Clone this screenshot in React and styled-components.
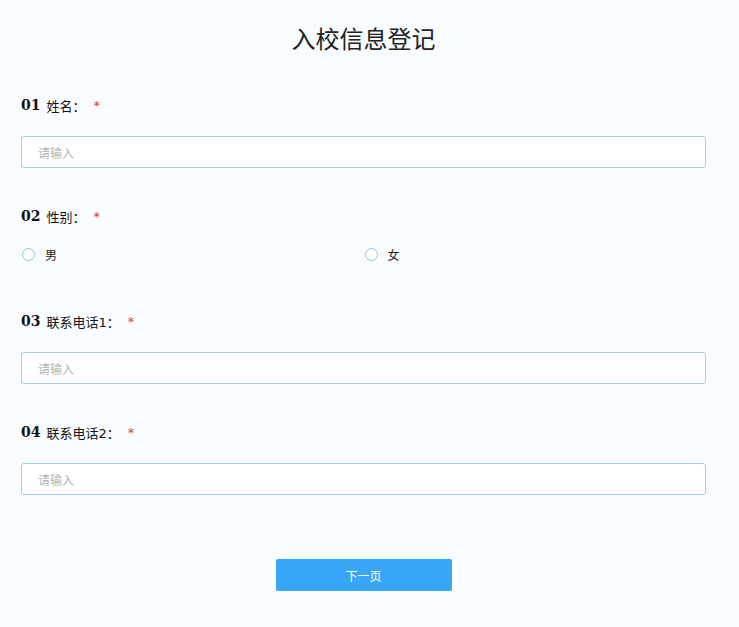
import styled, { createGlobalStyle } from 'styled-components';

const GlobalStyle = createGlobalStyle`
    html, body {
        margin: 0;
        padding: 0;
        background: #f9fcfe;
        font-family: "DejaVu Sans", "Noto Sans CJK SC", sans-serif;
        color: #222;
    }
`;

const Page = styled.div`
    width: 685px;
    padding: 22px 33px 36px 21px;
`;

const Title = styled.h1`
    margin: 0 0 41px;
    text-align: center;
    font-size: 24px;
    font-weight: normal;
    line-height: 32px;
    color: #222;
    font-family: "Noto Sans CJK SC", sans-serif;
`;

const Field = styled.div`
    margin-bottom: 38px;
`;

const Label = styled.div`
    display: flex;
    align-items: center;
    height: 20px;
    font-size: 13px;
    margin-bottom: 21px;
    color: #111;
`;

const Num = styled.span`
    font-family: "DejaVu Serif", serif;
    font-weight: bold;
    font-size: 14px;
    margin-right: 6px;
`;

const Star = styled.span`
    color: #c4464a;
    margin-left: 8px;
`;

const Input = styled.input`
    box-sizing: border-box;
    display: block;
    width: 100%;
    height: 32px;
    border: 1px solid #a3d3e1;
    border-radius: 3px;
    background: #fff;
    padding: 0 16px;
    font-size: 12px;
    font-family: "Noto Sans CJK SC", sans-serif;
    outline: none;
    &::placeholder {
        color: #b3b3b3;
    }
`;

/* padding, not margin: a margin here would collapse into the field's */
const Options = styled.div`
    display: grid;
    grid-template-columns: 1fr 1fr;
    padding-bottom: 12px;
`;

const Option = styled.label`
    display: flex;
    align-items: center;
    height: 14px;
    font-size: 12px;
    font-family: "Noto Sans CJK SC", sans-serif;
    color: #222;
`;

const Radio = styled.span`
    box-sizing: border-box;
    width: 13px;
    height: 13px;
    border: 1px solid #86c9dc;
    border-radius: 50%;
    background: #fff;
    margin-left: 1px;
    margin-right: 10px;
`;

const Footer = styled.div`
    display: flex;
    justify-content: center;
    padding-top: 26px;
`;

const Button = styled.button`
    width: 176px;
    height: 32px;
    border: none;
    border-radius: 2px;
    background: #38a6f8;
    color: #fff;
    font-size: 12px;
    font-family: "Noto Sans CJK SC", sans-serif;
`;

const TextField = ({ num, label }) => (
    <Field>
        <Label><Num>{num}</Num>{label}<Star>*</Star></Label>
        <Input placeholder="请输入" />
    </Field>
);

const App = () => (
    <>
        <GlobalStyle />
        <Page>
            <Title>入校信息登记</Title>
            <TextField num="01" label="姓名：" />
            <Field>
                <Label><Num>02</Num>性别：<Star>*</Star></Label>
                <Options>
                    <Option><Radio />男</Option>
                    <Option><Radio />女</Option>
                </Options>
            </Field>
            <TextField num="03" label="联系电话1：" />
            <TextField num="04" label="联系电话2：" />
            <Footer>
                <Button>下一页</Button>
            </Footer>
        </Page>
    </>
);

export default App;
